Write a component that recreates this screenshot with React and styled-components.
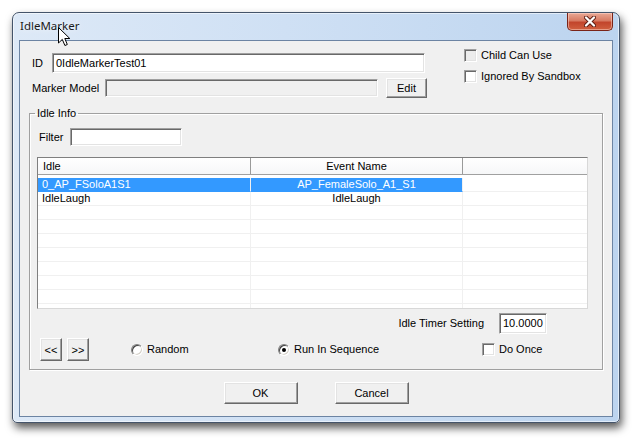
import React, { useState } from 'react'
import styled, { createGlobalStyle, css } from 'styled-components'

const GlobalStyle = createGlobalStyle`
  html, body {
    margin: 0;
    padding: 0;
    background: #ffffff;
  }
  body {
    font-family: 'Liberation Sans', Arial, sans-serif;
    font-size: 11px;
    color: #000;
  }
`

const sunken = css`
  border-style: solid;
  border-width: 1px;
  border-color: #a0a0a0 #ffffff #ffffff #a0a0a0;
  box-shadow: inset 1px 1px 0 #696969, inset -1px -1px 0 #e3e3e3;
`

const raised = css`
  border-style: solid;
  border-width: 1px;
  border-color: #ffffff #696969 #696969 #ffffff;
  box-shadow: inset -1px -1px 0 #a0a0a0, inset 1px 1px 0 #e3e3e3;
`

const Desktop = styled.div`
  padding: 12px;
  height: 442px;
  box-sizing: border-box;
  position: relative;
`

const Window = styled.div`
  width: 608px;
  box-sizing: border-box;
  border: 1px solid #44546a;
  border-radius: 7px 7px 5px 5px;
  padding: 0 7px 6px 7px;
  background: linear-gradient(to right, #dde9f7 0%, #cfe0f4 45%, #bcd4ef 100%);
  box-shadow: 2px 5px 9px rgba(0, 0, 0, 0.65), inset 0 0 0 1px rgba(255, 255, 255, 0.55);
`

const TitleBar = styled.div`
  height: 28px;
  display: flex;
  align-items: flex-start;
  justify-content: space-between;
`

const Title = styled.span`
  font-family: 'Noto Sans', 'Open Sans', sans-serif;
  font-size: 11.5px;
  line-height: 14px;
  color: #1a1a1a;
  margin-top: 6px;
  text-shadow: 0 0 6px rgba(255, 255, 255, 0.9);
`

const CloseButton = styled.button`
  width: 46px;
  height: 18px;
  margin-right: -1px;
  padding: 0;
  display: flex;
  align-items: center;
  justify-content: center;
  border: 1px solid #7a2418;
  border-top: none;
  border-radius: 0 0 5px 5px;
  background: linear-gradient(to bottom, #e9a895 0%, #d77a62 45%, #c2452c 55%, #d0603f 100%);
  box-shadow: inset 0 0 0 1px rgba(255, 220, 210, 0.5);
`

const Client = styled.div`
  height: 375px;
  background: #f0f0f0;
  box-shadow: 0 0 0 1px #6c84a3;
  display: flex;
  flex-direction: column;
`

const Top = styled.div`
  display: flex;
`

const Fields = styled.div`
  width: 444px;
  padding: 12px 0 0 12px;
  box-sizing: border-box;
  display: flex;
  flex-direction: column;
  gap: 5px;
`

const FieldRow = styled.div`
  display: flex;
  align-items: center;
  height: 20px;
`

const Label = styled.span`
  width: ${({ $width }) => $width || 'auto'};
  flex-shrink: 0;
  white-space: nowrap;
  line-height: 13px;
`

const TextBox = styled.div`
  ${sunken};
  box-sizing: border-box;
  width: ${({ $width }) => $width}px;
  height: ${({ $height }) => $height || 20}px;
  background: ${({ $disabled }) => ($disabled ? '#f0f0f0' : '#ffffff')};
  padding: 0 3px;
  display: flex;
  align-items: center;
  line-height: 13px;
  white-space: nowrap;
`

const Button = styled.button`
  ${raised};
  box-sizing: border-box;
  width: ${({ $width }) => $width}px;
  height: ${({ $height }) => $height}px;
  margin-left: ${({ $offset }) => $offset || 0}px;
  padding: 0;
  background: #f0f0f0;
  font-family: 'Liberation Sans', Arial, sans-serif;
  font-size: 11px;
  color: #000;
  flex-shrink: 0;
`

const Options = styled.div`
  padding-top: 8px;
  display: flex;
  flex-direction: column;
  gap: 8px;
`

const Check = styled.label`
  display: flex;
  align-items: center;
  gap: 4px;
  height: 13px;
  line-height: 13px;
  white-space: nowrap;
`

const CheckBox = styled.span`
  ${sunken};
  box-sizing: border-box;
  width: 13px;
  height: 13px;
  background: ${({ $shade }) => ($shade ? '#ececec' : '#ffffff')};
  flex-shrink: 0;
`

const Group = styled.fieldset`
  margin: 9px 0 0 9px;
  padding: 0 0 8px 0;
  width: 574px;
  box-sizing: border-box;
  border: 1px solid #a0a0a0;
  box-shadow: 1px 1px 0 #ffffff, inset 1px 1px 0 #ffffff;
  min-width: 0;
`

const Legend = styled.legend`
  margin-left: 5px;
  padding: 0 2px;
  line-height: 13px;
`

const FilterRow = styled.div`
  display: flex;
  align-items: center;
  margin-top: 8px;
  padding-left: 9px;
`

const List = styled.div`
  margin: 11px 0 0 7px;
  width: 551px;
  height: 152px;
  box-sizing: border-box;
  border: 1px solid;
  border-color: #7f7f7f #d8d8d8 #d8d8d8 #7f7f7f;
  background: #ffffff;
  overflow: hidden;
`

const columns = '213px 212px 1fr'

const Header = styled.div`
  display: grid;
  grid-template-columns: ${columns};
  height: 17px;
  box-sizing: border-box;
  border-bottom: 1px solid #a0a0a0;
  background: linear-gradient(to bottom, #ffffff, #f6f7f8);
`

const HeadCell = styled.div`
  padding: 0 5px;
  line-height: 16px;
  border-right: ${({ $last }) => ($last ? 'none' : '1px solid #9a9a9a')};
  text-align: ${({ $center }) => ($center ? 'center' : 'left')};
  white-space: nowrap;
`

const Body = styled.div`
  padding-top: 3px;
`

const Row = styled.div`
  display: grid;
  grid-template-columns: ${columns};
  height: 14px;
`

const Cell = styled.div`
  box-sizing: border-box;
  height: 14px;
  padding: 0 4px;
  line-height: 13px;
  white-space: nowrap;
  border-bottom: 1px solid #f0f0f0;
  border-right: ${({ $last }) => ($last ? 'none' : '1px solid #f0f0f0')};
  text-align: ${({ $center }) => ($center ? 'center' : 'left')};

  ${({ $selected }) =>
    $selected &&
    css`
      background: #3399ff;
      color: #ffffff;
      border-bottom-color: #3399ff;
    `}
`

const TimerRow = styled.div`
  display: flex;
  justify-content: flex-end;
  align-items: center;
  gap: 15px;
  margin-top: 4px;
  padding-right: 55px;
`

const ControlRow = styled.div`
  display: flex;
  align-items: center;
  height: 23px;
  margin-top: 4px;
  padding-left: 10px;
`

const Radio = styled.label`
  display: flex;
  align-items: center;
  gap: 4px;
  width: ${({ $width }) => $width}px;
  margin-left: ${({ $offset }) => $offset || 0}px;
  line-height: 13px;
  white-space: nowrap;
`

const RadioDot = styled.span`
  width: 12px;
  height: 12px;
  box-sizing: border-box;
  border-radius: 50%;
  border: 1px solid;
  border-color: #808080 #ffffff #ffffff #808080;
  box-shadow: inset 1px 1px 0 #404040, inset -1px -1px 0 #d4d0c8;
  background: #ffffff;
  display: flex;
  align-items: center;
  justify-content: center;
  flex-shrink: 0;

  &::after {
    content: '';
    width: 4px;
    height: 4px;
    border-radius: 50%;
    background: ${({ $checked }) => ($checked ? '#000' : 'transparent')};
  }
`

const Footer = styled.div`
  display: flex;
  justify-content: center;
  gap: 37px;
  margin-top: 12px;
`

const Pointer = styled.svg`
  position: absolute;
  left: 58px;
  top: 27px;
`

const rows = [
  { idle: '0_AP_FSoloA1S1', event: 'AP_FemaleSolo_A1_S1' },
  { idle: 'IdleLaugh', event: 'IdleLaugh' }
]

const CloseGlyph = () => (
  <svg width="12" height="11" viewBox="0 0 12 11">
    <path d="M2 1.5 L10 9.5 M10 1.5 L2 9.5" stroke="#5a1a10" strokeWidth="4" strokeLinecap="round" />
    <path d="M2 1.5 L10 9.5 M10 1.5 L2 9.5" stroke="#ffffff" strokeWidth="2.3" strokeLinecap="round" />
  </svg>
)

export default function App() {
  const [selected, setSelected] = useState(0)
  const [mode, setMode] = useState('sequence')
  const filler = Array.from({ length: 10 - rows.length })

  return (
    <Desktop>
      <GlobalStyle />
      <Window>
        <TitleBar>
          <Title>IdleMarker</Title>
          <CloseButton aria-label="Close">
            <CloseGlyph />
          </CloseButton>
        </TitleBar>

        <Client>
          <Top>
            <Fields>
              <FieldRow>
                <Label $width="20px">ID</Label>
                <TextBox $width={373}>0IdleMarkerTest01</TextBox>
              </FieldRow>
              <FieldRow>
                <Label $width="73px">Marker Model</Label>
                <TextBox $width={273} $height={18} $disabled />
                <Button $width={41} $height={20} $offset={8}>
                  Edit
                </Button>
              </FieldRow>
            </Fields>

            <Options>
              <Check>
                <CheckBox $shade />
                Child Can Use
              </Check>
              <Check>
                <CheckBox />
                Ignored By Sandbox
              </Check>
            </Options>
          </Top>

          <Group>
            <Legend>Idle Info</Legend>

            <FilterRow>
              <Label $width="31px">Filter</Label>
              <TextBox $width={112} $height={18} />
            </FilterRow>

            <List>
              <Header>
                <HeadCell>Idle</HeadCell>
                <HeadCell $center>Event Name</HeadCell>
                <HeadCell $last />
              </Header>
              <Body>
                {rows.map((row, i) => (
                  <Row key={row.idle} onClick={() => setSelected(i)}>
                    <Cell $selected={selected === i}>{row.idle}</Cell>
                    <Cell $selected={selected === i} $center>
                      {row.event}
                    </Cell>
                    <Cell $last />
                  </Row>
                ))}
                {filler.map((_, i) => (
                  <Row key={i}>
                    <Cell />
                    <Cell />
                    <Cell $last />
                  </Row>
                ))}
              </Body>
            </List>

            <TimerRow>
              <Label>Idle Timer Setting</Label>
              <TextBox $width={48} $height={21}>
                10.0000
              </TextBox>
            </TimerRow>

            <ControlRow>
              <Button $width={22} $height={23}>
                &lt;&lt;
              </Button>
              <Button $width={22} $height={23} $offset={5}>
                &gt;&gt;
              </Button>
              <Radio $width={147} $offset={42} onClick={() => setMode('random')}>
                <RadioDot $checked={mode === 'random'} />
                Random
              </Radio>
              <Radio $width={204} onClick={() => setMode('sequence')}>
                <RadioDot $checked={mode === 'sequence'} />
                Run In Sequence
              </Radio>
              <Check>
                <CheckBox />
                Do Once
              </Check>
            </ControlRow>
          </Group>

          <Footer>
            <Button $width={74} $height={22}>
              OK
            </Button>
            <Button $width={74} $height={22}>
              Cancel
            </Button>
          </Footer>
        </Client>
      </Window>

      {/* mouse pointer resting on the caption */}
      <Pointer width="13" height="20" viewBox="0 0 13 20">
        <path
          d="M0.5 0.5 L0.5 16 L4.3 12.4 L6.9 18.5 L9.3 17.5 L6.8 11.5 L11.8 11.5 Z"
          fill="#ffffff"
          stroke="#000000"
          strokeWidth="1"
          strokeLinejoin="miter"
        />
      </Pointer>
    </Desktop>
  )
}
